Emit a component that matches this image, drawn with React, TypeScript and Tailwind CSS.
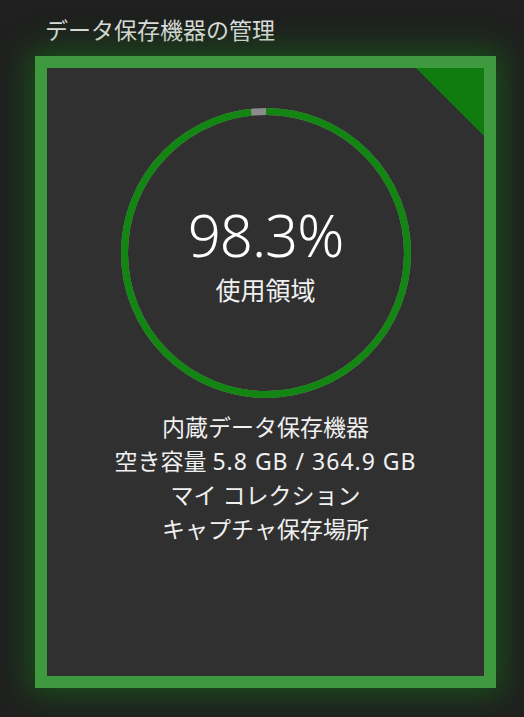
const FONT = "font-['Noto_Sans','Noto_Sans_CJK_JP',sans-serif]"

const USED = 98.3

function UsageRing({ percent }: { percent: number }) {
  const size = 290
  const stroke = 7
  const r = (size - stroke) / 2
  const c = 2 * Math.PI * r
  const used = (c * percent) / 100
  return (
    <svg width={size} height={size} className="absolute inset-0">
      {/* free part (grey) */}
      <circle cx={size / 2} cy={size / 2} r={r} fill="none" stroke="#8c8c8c" strokeWidth={stroke} />
      {/* used part, clockwise from the top */}
      <circle
        cx={size / 2}
        cy={size / 2}
        r={r}
        fill="none"
        stroke="#128512"
        strokeWidth={stroke}
        strokeDasharray={`${used} ${c}`}
        transform={`rotate(-90 ${size / 2} ${size / 2})`}
      />
    </svg>
  )
}

export default function App() {
  return (
    <div className={`${FONT} w-[524px] h-[717px] bg-[#1f201f] overflow-hidden flex flex-col`}>
      <h1 className="pl-[45px] pt-[14px] h-[56px] text-[23px] leading-[32px] text-[#dedede]">
        データ保存機器の管理
      </h1>

      <div className="ml-[35px] w-[461px] h-[632px] border-[12px] border-[#3f9a3f] bg-[#303030] shadow-[0_0_30px_6px_rgba(20,130,20,0.5)] relative flex flex-col items-center">
        {/* corner flag */}
        <div className="absolute top-0 right-0 w-[68px] h-[68px] bg-[#107c10] [clip-path:polygon(0_0,100%_0,100%_100%)]" />

        <div className="relative mt-[40px] w-[290px] h-[290px] flex flex-col items-center">
          <UsageRing percent={USED} />
          <div className="relative pt-[97px] text-[58px] leading-[60px] font-light text-white tracking-[-1px]">
            {USED}%
          </div>
          <div className="relative mt-[10px] text-[25px] leading-[30px] text-[#f0f0f0]">使用領域</div>
        </div>

        <div className="mt-[12px] flex flex-col items-center text-[23px] leading-[34px] text-[#f0f0f0]">
          <span>内蔵データ保存機器</span>
          <span>
            空き容量 <span className="tracking-[1px]">5.8 GB / 364.9 GB</span>
          </span>
          <span>マイ コレクション</span>
          <span>キャプチャ保存場所</span>
        </div>
      </div>
    </div>
  )
}
